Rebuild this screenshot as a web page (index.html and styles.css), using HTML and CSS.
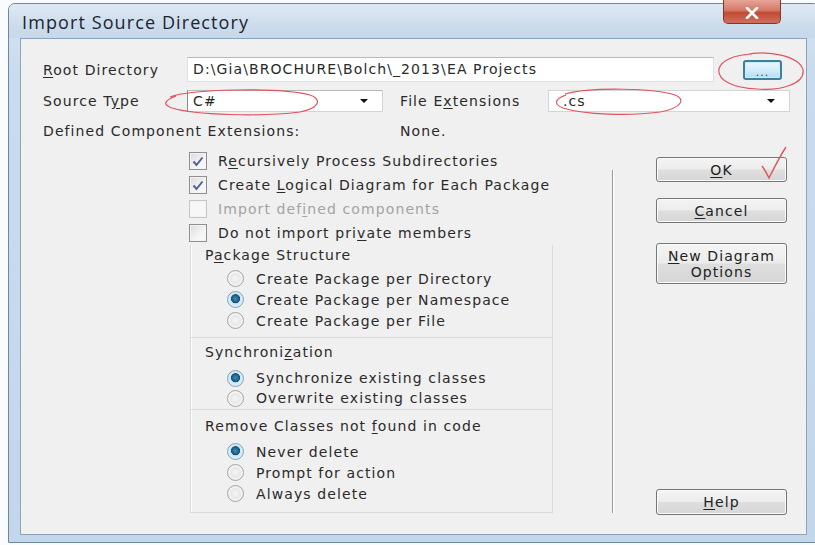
FILE: index.html
```html
<!DOCTYPE html>
<html>
<head>
<meta charset="utf-8">
<title>Import Source Directory</title>
<link rel="stylesheet" href="styles.css">
</head>
<body>
<div class="window">
  <div class="titlebar">
    <span class="title">Import Source Directory</span>
    <div class="close-btn">
      <svg width="14" height="12" viewBox="0 0 14 12"><path d="M2 1 L12 11 M12 1 L2 11" stroke="#fff" stroke-width="2.6" stroke-linecap="round"/></svg>
    </div>
  </div>
  <div class="client">
    <div class="field-row row-root">
      <span class="lbl"><u>R</u>oot Directory</span>
      <div class="textbox">D:\Gia\BROCHURE\Bolch\_2013\EA Projects</div>
      <div class="browse"><span>...</span></div>
    </div>
    <div class="field-row row-type">
      <span class="lbl">Source T<u>y</u>pe</span>
      <div class="combo combo-type"><span>C#</span><i class="arrow"></i></div>
      <span class="lbl lbl-ext">File E<u>x</u>tensions</span>
      <div class="combo combo-ext"><span>.cs</span><i class="arrow"></i></div>
    </div>
    <div class="field-row row-info">
      <span class="lbl lbl-wide">Defined Component Extensions:</span>
      <span>None.</span>
    </div>
    <div class="main">
      <div class="options">
        <div class="check-row"><span class="cb checked"><svg width="12" height="11" viewBox="0 0 12 11"><path d="M1.5 5.5 L4.5 9 L10.5 1.5" fill="none" stroke="#4c62a0" stroke-width="2"/></svg></span><span>R<u>e</u>cursively Process Subdirectories</span></div>
        <div class="check-row"><span class="cb checked"><svg width="12" height="11" viewBox="0 0 12 11"><path d="M1.5 5.5 L4.5 9 L10.5 1.5" fill="none" stroke="#4c62a0" stroke-width="2"/></svg></span><span>Create <u>L</u>ogical Diagram for Each Package</span></div>
        <div class="check-row disabled"><span class="cb"></span><span>Import def<u>i</u>ned components</span></div>
        <div class="check-row"><span class="cb"></span><span>Do not import pri<u>v</u>ate members</span></div>

        <div class="group group-pkg">
          <div class="group-title">P<u>a</u>ckage Structure</div>
          <div class="radio-row"><span class="rb"></span><span>Create Package per Directory</span></div>
          <div class="radio-row"><span class="rb on"></span><span>Create Package per Namespace</span></div>
          <div class="radio-row"><span class="rb"></span><span>Create Package per File</span></div>
        </div>
        <div class="group group-sync">
          <div class="group-title">Synchroni<u>z</u>ation</div>
          <div class="radio-row"><span class="rb on"></span><span>Synchronize existing classes</span></div>
          <div class="radio-row"><span class="rb"></span><span>Overwrite existing classes</span></div>
        </div>
        <div class="group group-remove">
          <div class="group-title">Remove Classes not <u>f</u>ound in code</div>
          <div class="radio-row"><span class="rb on"></span><span>Never delete</span></div>
          <div class="radio-row"><span class="rb"></span><span>Prompt for action</span></div>
          <div class="radio-row"><span class="rb"></span><span>Always delete</span></div>
        </div>
      </div>
      <div class="separator"></div>
      <div class="actions">
        <div class="btn btn-ok"><span><u>O</u>K</span></div>
        <div class="btn btn-cancel"><span><u>C</u>ancel</span></div>
        <div class="btn btn-diagram"><span><u>N</u>ew Diagram<br>Options</span></div>
        <div class="btn btn-help"><span><u>H</u>elp</span></div>
      </div>
    </div>
  </div>
</div>

<!-- red pen marks drawn over the dialog -->
<svg class="marks" width="815" height="545" viewBox="0 0 815 545">
  <path d="M744 55 C770 49 800 57 803 70 C805 84 780 91 757 89 C733 88 717 80 719 69 C721 60 735 55 752 54" fill="none" stroke="#e0535f" stroke-width="1.2"/>
  <path d="M170 97 C190 89 280 87 310 95 C322 99 320 108 300 112 C260 117 195 115 172 108 C163 105 163 101 176 96" fill="none" stroke="#e0535f" stroke-width="1.2"/>
  <path d="M565 94 C590 87 655 88 675 95 C686 99 682 108 660 112 C630 116 585 115 563 108 C553 104 555 99 566 95" fill="none" stroke="#e0535f" stroke-width="1.2"/>
  <path d="M762 166 C765 170 767 174 769 178 C774 168 780 156 786 147" fill="none" stroke="#e0535f" stroke-width="1.4"/>
</svg>
</body>
</html>
```

FILE: styles.css
```css
html, body {
  margin: 0;
  height: 100%;
}

body {
  background: #f9fbfd;
  overflow: hidden;
  font-family: "DejaVu Sans", "Liberation Sans", sans-serif;
  font-size: 14px;
  letter-spacing: 1.1px;
  color: #2a2a2a;
}

u {
  text-decoration: underline;
  text-underline-offset: 2px;
}

/* ---------- window frame ---------- */
.window {
  margin: 3px 0 0 8px;
  width: 812px;
  height: 540px;
  box-sizing: border-box;
  border: 1px solid #6e86a0;
  border-radius: 7px 7px 0 0;
  background: linear-gradient(180deg, #d9e5f1 0%, #c9dbee 12%, #c2d6ec 100%);
  display: flex;
  flex-direction: column;
}

.titlebar {
  height: 34px;
  flex: none;
  display: flex;
  align-items: center;
  padding-left: 13px;
  position: relative;
  background: linear-gradient(180deg, #dfe9f4 0%, #cddcec 60%, #c6d8eb 100%);
  border-radius: 6px 6px 0 0;
}

.title {
  font-family: "Open Sans", "Noto Sans", sans-serif;
  font-size: 18px;
  letter-spacing: 1.1px;
  color: #1c2430;
  padding-top: 1px;
}

.close-btn {
  position: absolute;
  top: -4px;
  right: 38px;
  width: 58px;
  height: 24px;
  box-sizing: border-box;
  border: 1px solid #7b3b35;
  border-top: none;
  border-radius: 0 0 5px 5px;
  background: linear-gradient(180deg, #e6a597 0%, #d67866 45%, #c24b35 55%, #d0705a 100%);
  display: flex;
  align-items: center;
  justify-content: center;
  padding-top: 3px;
}

.client {
  flex: 1;
  margin: 0 12px 7px 11px;
  background: #f0f0f0;
  border: 1px solid #8da3bc;
  padding: 18px 0 0 22px;
  display: flex;
  flex-direction: column;
}

/* ---------- top fields ---------- */
.field-row {
  display: flex;
  align-items: center;
}

.row-root {
  height: 25px;
}

.row-type {
  height: 22px;
  margin-top: 8px;
}

.row-info {
  height: 18px;
  margin-top: 10px;
}

.lbl {
  width: 144px;
  flex: none;
  white-space: nowrap;
}

.lbl-ext {
  width: 148px;
  margin-left: 17px;
}

.lbl-wide {
  width: 357px;
}

.textbox {
  width: 527px;
  height: 25px;
  box-sizing: border-box;
  background: #fff;
  border: 1px solid #dde1e7;
  border-top-color: #b5b8bf;
  padding: 0 5px;
  line-height: 23px;
  white-space: nowrap;
}

.browse {
  margin-left: 29px;
  width: 39px;
  height: 20px;
  box-sizing: border-box;
  border: 2px solid #3e7f9c;
  border-radius: 3px;
  background: linear-gradient(180deg, #eaf6fd 0%, #d3edfa 50%, #b4ddf2 100%);
  box-shadow: inset 0 0 0 1px #c7ecfb;
  display: flex;
  align-items: flex-end;
  justify-content: center;
  font-size: 11px;
  letter-spacing: 1px;
  line-height: 10px;
  color: #344;
}

.combo {
  position: relative;
  height: 22px;
  box-sizing: border-box;
  background: #fff;
  border: 1px solid #d4d4d4;
  line-height: 20px;
  padding-left: 5px;
}

.combo-type {
  width: 196px;
  border-left-color: #8c8c8c;
  border-top-color: #b8b8b8;
}

.combo-ext {
  width: 242px;
  padding-left: 14px;
}

.arrow {
  position: absolute;
  right: 14px;
  top: 8px;
  width: 0;
  height: 0;
  border-left: 4px solid transparent;
  border-right: 4px solid transparent;
  border-top: 4px solid #111;
}

/* ---------- options column ---------- */
.main {
  display: flex;
  height: 366px;
  margin-top: 9px;
}

.options {
  margin-left: 145px;
  width: 424px;
  flex: none;
  padding-bottom: 2px;
  display: flex;
  flex-direction: column;
}

.check-row {
  height: 24px;
  display: flex;
  align-items: center;
  white-space: nowrap;
}

.check-row.disabled {
  color: #a3a3a3;
}

.cb {
  width: 18px;
  height: 18px;
  box-sizing: border-box;
  margin: 0 11px 0 1px;
  border: 1px solid #8f8f8f;
  background: linear-gradient(135deg, #dcdcdc 0%, #f4f4f4 60%, #fbfbfb 100%);
  box-shadow: inset 0 0 0 1px #f4f4f4;
  display: flex;
  align-items: center;
  justify-content: center;
}

.disabled .cb {
  border-color: #c6c6c6;
  background: #f7f7f7;
}

.group {
  margin-left: 2px;
  width: 363px;
  box-sizing: border-box;
  border: 1px solid #dadada;
  border-top: none;
  box-shadow: inset 1px 0 0 #fff;
}

.group-pkg {
  height: 93px;
}

.group-sync {
  height: 72px;
  padding-top: 4px;
}

.group-remove {
  height: 103px;
  padding-top: 6px;
}

.group-title {
  height: 23px;
  line-height: 21px;
  padding-left: 14px;
  white-space: nowrap;
}

.group-sync .group-title {
  height: 20px;
  line-height: 20px;
  margin-bottom: 6px;
}

.group-remove .group-title {
  height: 20px;
  line-height: 20px;
  margin-bottom: 5px;
}

.radio-row {
  height: 21px;
  display: flex;
  align-items: center;
  padding-left: 36px;
  white-space: nowrap;
}

.group-sync .radio-row {
  height: 20px;
}

.rb {
  width: 17px;
  height: 17px;
  box-sizing: border-box;
  margin-right: 12px;
  border-radius: 50%;
  border: 1px solid #a6a6a6;
  background: radial-gradient(circle at 50% 50%, #f6f6f6 0%, #e3e3e3 60%, #d2d2d2 100%);
  box-shadow: inset 0 0 0 2px #f3f3f3;
}

.rb.on {
  border-color: #7fa3bd;
  background:
    radial-gradient(circle at 50% 45%, #3f8fb9 0%, #1d5f86 30%, #1b4f73 38%, #cfe7f4 44%, #e7f4fb 100%);
  box-shadow: none;
}

.separator {
  width: 1px;
  margin: 21px 0 2px;
  background: #9a9a9a;
  box-shadow: 1px 0 0 #fff;
}

/* ---------- buttons ---------- */
.actions {
  margin-left: 43px;
  width: 131px;
  display: flex;
  flex-direction: column;
}

.btn {
  box-sizing: border-box;
  border: 1px solid #767676;
  border-radius: 3px;
  background: linear-gradient(180deg, #f4f4f4 0%, #ececec 48%, #dedede 52%, #d6d6d6 100%);
  box-shadow: inset 0 0 0 1px #fbfbfb;
  display: flex;
  align-items: center;
  justify-content: center;
  text-align: center;
  color: #222;
}

.btn-ok {
  height: 25px;
  margin-top: 8px;
}

.btn-cancel {
  height: 25px;
  margin-top: 16px;
}

.btn-diagram {
  height: 41px;
  margin-top: 20px;
  line-height: 16px;
}

.btn-help {
  height: 26px;
  margin-top: auto;
}

/* ---------- pen marks ---------- */
.marks {
  position: absolute;
  left: 0;
  top: 0;
  pointer-events: none;
}
```
